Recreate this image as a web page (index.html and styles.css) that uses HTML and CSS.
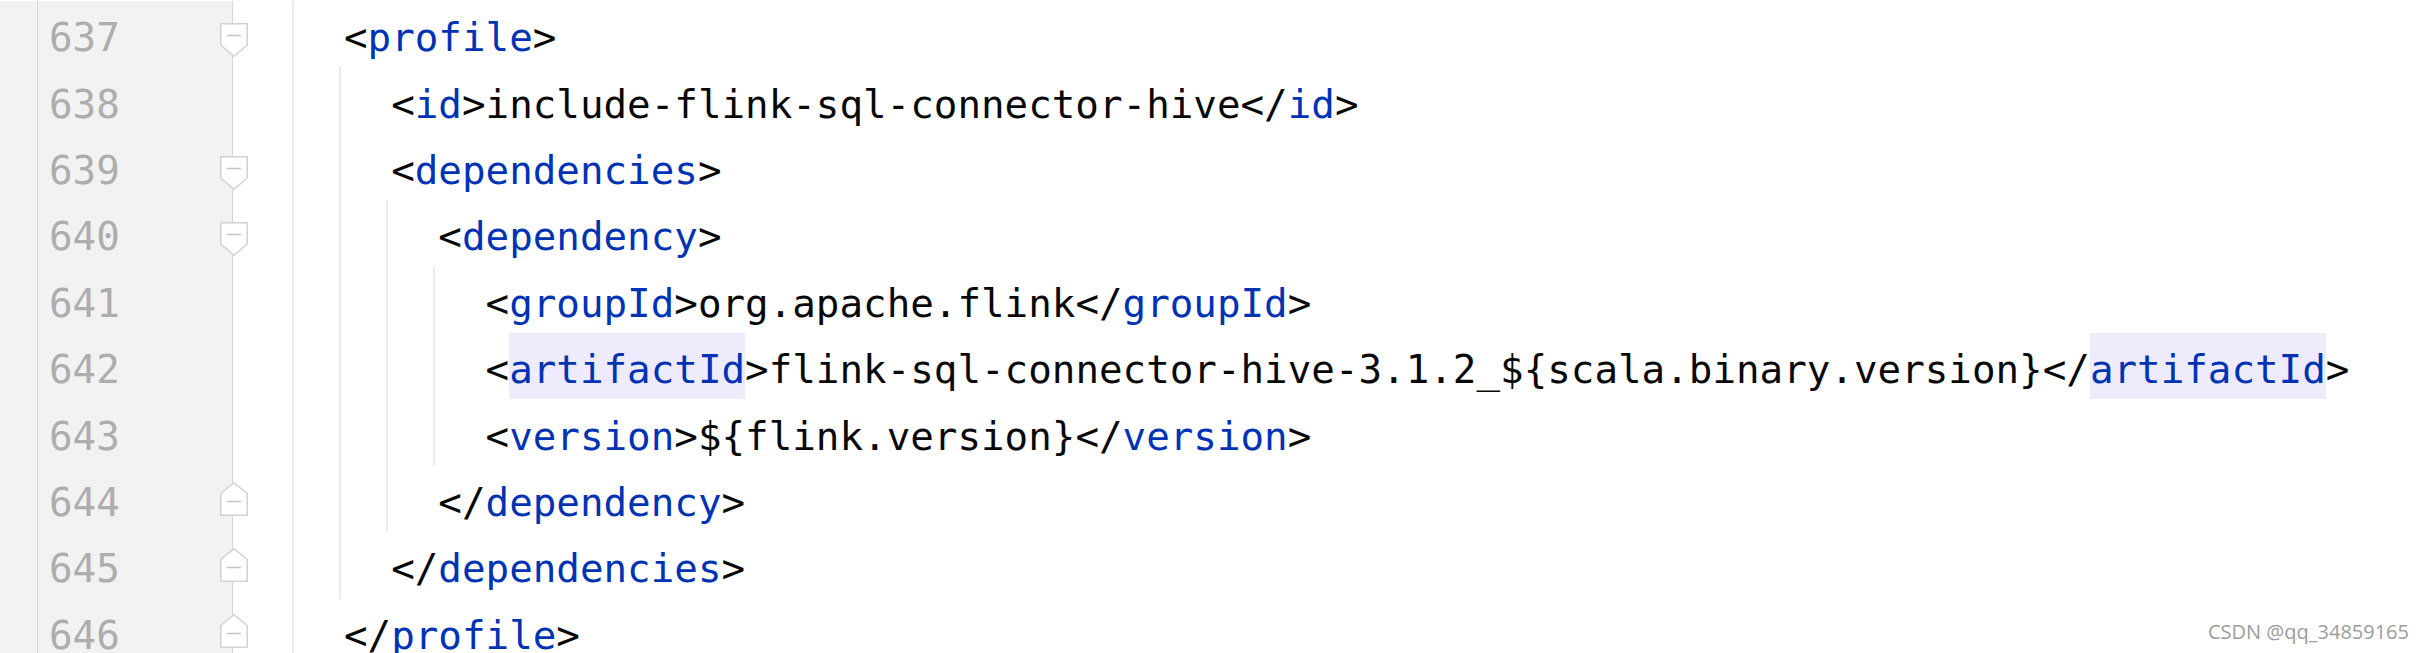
FILE: index.html
```html
<!DOCTYPE html>
<html lang="en">
<head>
<meta charset="utf-8">
<title>pom.xml</title>
<link rel="stylesheet" href="styles.css">
</head>
<body>
<div class="editor">
  <div class="gutter">
    <div class="strip"></div>
    <div class="numbers">
      <div class="num">637</div>
      <div class="num">638</div>
      <div class="num">639</div>
      <div class="num">640</div>
      <div class="num">641</div>
      <div class="num">642</div>
      <div class="num">643</div>
      <div class="num">644</div>
      <div class="num">645</div>
      <div class="num">646</div>
    </div>
    <div class="folds">
      <div class="fold"><svg class="mk-open" width="28" height="34" viewBox="0 0 28 34"><path d="M0.75 0.75 H27.25 V22 L14 33.25 L0.75 22 Z"/><line x1="7" y1="12.5" x2="21" y2="12.5"/></svg></div>
      <div class="fold"></div>
      <div class="fold"><svg class="mk-open" width="28" height="34" viewBox="0 0 28 34"><path d="M0.75 0.75 H27.25 V22 L14 33.25 L0.75 22 Z"/><line x1="7" y1="12.5" x2="21" y2="12.5"/></svg></div>
      <div class="fold"><svg class="mk-open" width="28" height="34" viewBox="0 0 28 34"><path d="M0.75 0.75 H27.25 V22 L14 33.25 L0.75 22 Z"/><line x1="7" y1="12.5" x2="21" y2="12.5"/></svg></div>
      <div class="fold"></div>
      <div class="fold"></div>
      <div class="fold"></div>
      <div class="fold"><svg class="mk-close" width="28" height="34" viewBox="0 0 28 34"><path d="M0.75 11.5 L14 0.75 L27.25 11.5 V33.25 H0.75 Z"/><line x1="7" y1="19.5" x2="21" y2="19.5"/></svg></div>
      <div class="fold"><svg class="mk-close" width="28" height="34" viewBox="0 0 28 34"><path d="M0.75 11.5 L14 0.75 L27.25 11.5 V33.25 H0.75 Z"/><line x1="7" y1="19.5" x2="21" y2="19.5"/></svg></div>
      <div class="fold"><svg class="mk-close" width="28" height="34" viewBox="0 0 28 34"><path d="M0.75 11.5 L14 0.75 L27.25 11.5 V33.25 H0.75 Z"/><line x1="7" y1="19.5" x2="21" y2="19.5"/></svg></div>
    </div>
  </div>
  <div class="code">
    <div class="kids">
      <div class="ln">&lt;<span class="t">profile</span>&gt;</div>
      <div class="kids">
        <div class="ln">&lt;<span class="t">id</span>&gt;include-flink-sql-connector-hive&lt;/<span class="t">id</span>&gt;</div>
        <div class="ln">&lt;<span class="t">dependencies</span>&gt;</div>
        <div class="kids">
          <div class="ln">&lt;<span class="t">dependency</span>&gt;</div>
          <div class="kids">
            <div class="ln">&lt;<span class="t">groupId</span>&gt;org.apache.flink&lt;/<span class="t">groupId</span>&gt;</div>
            <div class="ln">&lt;<span class="t hl">artifactId</span>&gt;flink-sql-connector-hive-3.1.2_${scala.binary.version}&lt;/<span class="t hl">artifactId</span>&gt;</div>
            <div class="ln">&lt;<span class="t">version</span>&gt;${flink.version}&lt;/<span class="t">version</span>&gt;</div>
          </div>
          <div class="ln">&lt;/<span class="t">dependency</span>&gt;</div>
        </div>
        <div class="ln">&lt;/<span class="t">dependencies</span>&gt;</div>
      </div>
      <div class="ln">&lt;/<span class="t">profile</span>&gt;</div>
    </div>
  </div>
</div>
<div class="watermark">CSDN @qq_34859165</div>
</body>
</html>
```
FILE: styles.css
```css
html, body {
  margin: 0;
  padding: 0;
  height: 653px;
  overflow: hidden;
  background: #ffffff;
}
body {
  position: relative;
  font-family: "DejaVu Sans Mono", "Liberation Mono", monospace;
  font-size: 39.2px;
  color: #080808;
}
.editor {
  display: flex;
  padding-top: 1px;
}
.gutter {
  display: flex;
  width: 233px;
  flex: 0 0 233px;
  box-sizing: border-box;
  background: #f2f2f2;
  border-right: 1px solid #d5d5d5;
}
.strip {
  width: 38px;
  flex: 0 0 38px;
  box-sizing: border-box;
  border-right: 1px solid #d8d8d8;
  margin-top: -1px;
}
.numbers {
  flex: 1;
  min-width: 0;
  padding-left: 11px;
  color: #adadad;
}
.num, .ln {
  height: 66.4px;
  box-sizing: border-box;
  padding-top: 7.2px;
  line-height: 59.2px;
  white-space: pre;
}
.folds {
  width: 28px;
  flex: 0 0 28px;
  margin-right: -16px;
}
.fold {
  height: 66.4px;
  display: flex;
  flex-direction: column;
}
.fold svg {
  display: block;
  flex: 0 0 auto;
}
.fold svg path {
  fill: #ffffff;
  stroke: #d2d2d2;
  stroke-width: 1.5;
}
.fold svg line {
  stroke: #c4c4c4;
  stroke-width: 1.5;
}
.mk-open {
  margin-top: 22.3px;
}
.mk-close {
  margin-top: 15.9px;
}
.code {
  flex: 1;
  min-width: 0;
  padding-left: 63.8px;
}
.kids {
  margin-left: -5px;
  border-left: 2px solid #ebebeb;
  padding-left: 50.2px;
}
.t {
  color: #0033b3;
}
.hl {
  background: #edebfc;
  padding-top: 14px;
  padding-bottom: 7px;
}
.watermark {
  position: absolute;
  right: 15px;
  bottom: 11px;
  font-family: "Open Sans", "Noto Sans", sans-serif;
  font-size: 20px;
  line-height: 20px;
  color: #9c9c9c;
  text-shadow: 0 0 1px rgba(255, 255, 255, 0.8);
}
```
